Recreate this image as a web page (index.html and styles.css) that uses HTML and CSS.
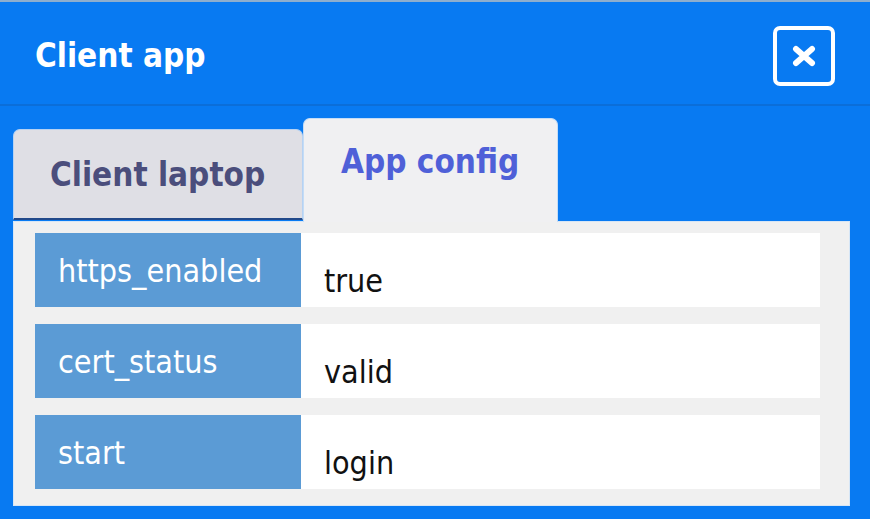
FILE: index.html
```html
<!DOCTYPE html>
<html>
<head>
<meta charset="utf-8">
<link rel="stylesheet" href="styles.css">
</head>
<body>
<div class="window">
  <header class="header">
    <h1 class="title">Client app</h1>
    <button class="close" aria-label="Close">
      <svg width="24" height="22" viewBox="0 0 24 22"><path d="M4 4 L20 18 M20 4 L4 18" stroke="#fff" stroke-width="6" stroke-linecap="round" fill="none"/></svg>
    </button>
  </header>
  <main class="body">
    <div class="tabs">
      <div class="tab tab-inactive">Client laptop</div>
      <div class="tab tab-active">App config</div>
    </div>
    <div class="panel">
      <div class="row"><div class="key">https_enabled</div><div class="val">true</div></div>
      <div class="row"><div class="key">cert_status</div><div class="val">valid</div></div>
      <div class="row"><div class="key">start</div><div class="val">login</div></div>
    </div>
  </main>
</div>
</body>
</html>
```
FILE: styles.css
```css
* { box-sizing: border-box; }
html, body { margin: 0; padding: 0; }
body {
  width: 870px;
  height: 519px;
  overflow: hidden;
  background: #087af2;
  font-family: "DejaVu Sans Condensed", "DejaVu Sans", sans-serif;
  font-stretch: condensed;
}
.window { height: 519px; background: #087af2; }
.header {
  height: 106px;
  border-top: 2px solid #8eaecd;
  border-bottom: 2px solid #0b6ed9;
  padding: 6px 35px 0 35px;
  display: flex;
  align-items: center;
  justify-content: space-between;
  background: #087af2;
}
.title {
  margin: 0;
  color: #fff;
  font-size: 33px;
  line-height: 40px;
  font-weight: bold;
}
.close {
  width: 62px;
  height: 60px;
  border: 4px solid #fff;
  border-radius: 7px;
  background: #087af2;
  padding: 0;
  display: flex;
  align-items: center;
  justify-content: center;
}
.close svg { display: block; }
.body { padding: 12px 20px 0 13px; }
.tabs {
  display: flex;
  align-items: flex-end;
  height: 103px;
  position: relative;
  z-index: 2;
}
.tab {
  font-size: 33px;
  font-weight: bold;
  line-height: 40px;
  border-radius: 7px 7px 0 0;
}
.tab-inactive {
  width: 290px;
  height: 91px;
  margin-bottom: 1px;
  background: #dfdfe5;
  color: #4b4e7c;
  border: 1px solid #b6d2f3;
  border-bottom: 2px solid #21498a;
  padding: 25px 0 0 36px;
}
.tab-active {
  width: 255px;
  height: 104px;
  margin-bottom: -1px;
  background: #f0f0f2;
  color: #4f60d8;
  border: 1px solid #c4dcf6;
  border-bottom: none;
  padding: 23px 0 0 37px;
}
.panel {
  background: #f0f0f0;
  border: 1px solid #d6e6f6;
  height: 285px;
  padding: 11px 29px 0 21px;
  display: flex;
  flex-direction: column;
  gap: 17px;
}
.row {
  display: flex;
  height: 74px;
}
.key {
  width: 266px;
  background: #5b9bd5;
  color: #fff;
  font-size: 32px;
  line-height: 38px;
  padding: 19px 0 0 23px;
}
.val {
  flex: 1;
  background: #fff;
  color: #111;
  font-size: 32px;
  line-height: 38px;
  padding: 29px 0 0 23px;
}
```
